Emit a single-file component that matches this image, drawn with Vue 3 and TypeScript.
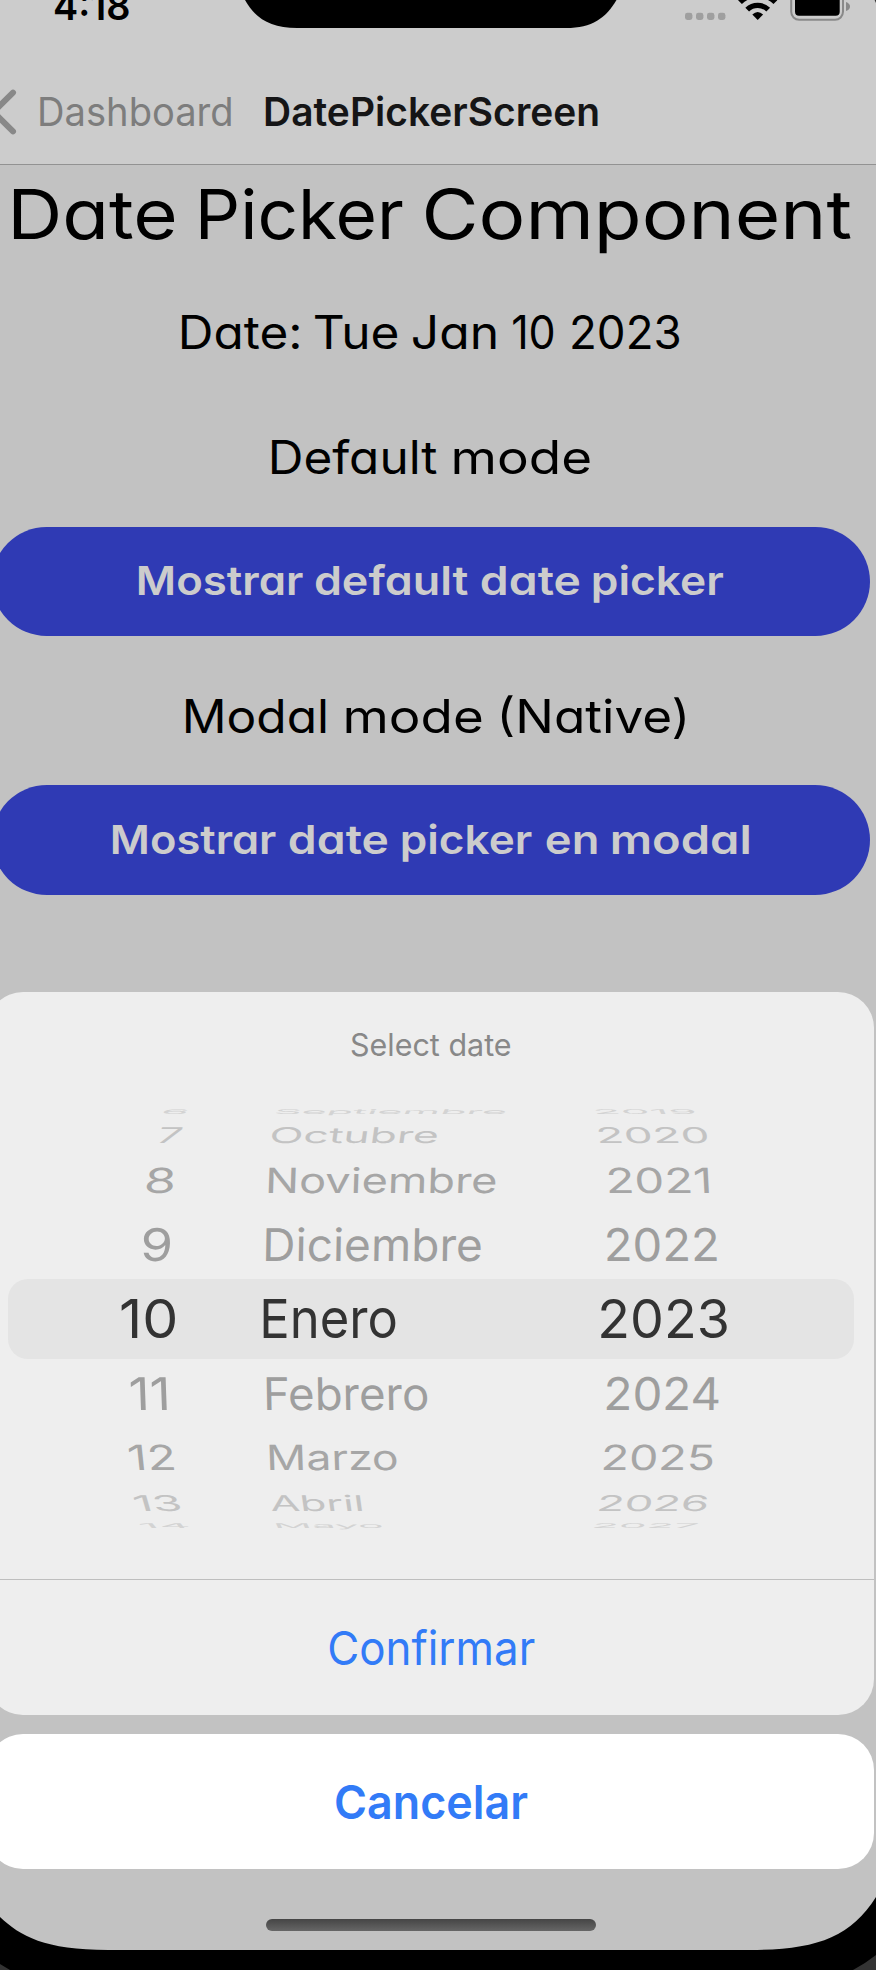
<script setup lang="ts">
interface Ink {
  left: number
  width: number
  advance: number
}

interface Word {
  text: string
  width: number
  gap: number
}

interface WheelItem {
  text: string
  left: number
  right: number
  skew: number
}

interface WheelRow {
  top: number
  base: number
  color: string
  items: WheelItem[]
}

const FAMILY = 'Inter, "Liberation Sans", sans-serif'
const WHEEL_SIZE = 54
const CAP_RATIO = 0.727
const pen = document.createElement('canvas').getContext('2d')!

function measure(text: string, font: string): Ink {
  pen.font = font
  const m = pen.measureText(text)
  return {
    left: -m.actualBoundingBoxLeft,
    width: m.actualBoundingBoxLeft + m.actualBoundingBoxRight,
    advance: m.width,
  }
}

// Gives a label a box of the bound width and stretches its glyphs to fill it edge to edge.
const vFit = {
  mounted(el: HTMLElement, binding: { value: number }) {
    const cs = getComputedStyle(el)
    const ink = measure(el.textContent!.trim(), `${cs.fontWeight} ${cs.fontSize} ${FAMILY}`)
    const inkWidth = el.getBoundingClientRect().width - (ink.advance - ink.width)
    const scale = binding.value / inkWidth
    el.style.width = `${binding.value}px`
    el.style.transformOrigin = '0 50%'
    el.style.transform = `scaleX(${scale.toFixed(4)}) translateX(${(-ink.left).toFixed(2)}px)`
  },
}

// Each word is listed with the gap before it and its own width.
const line = (...parts: [string, number, number][]): Word[] =>
  parts.map(([text, gap, width]) => ({ text, gap, width }))

const title = line(['Date', 13.5, 160.5], ['Picker', 27, 202], ['Component', 23, 424.5])
const dateLine = line(['Date:', 181.5, 117], ['Tue', 16.5, 82.5], ['Jan', 15.5, 82.7], ['10', 17.8, 40.8], ['2023', 17.4, 107.3])
const defaultLine = line(['Default', 271.5, 165.5], ['mode', 17.3, 136])
const defaultButton = line(['Mostrar', 145.5, 165.5], ['default', 12, 153.3], ['date', 12.4, 98], ['picker', 14.3, 131])
const modalLine = line(['Modal', 186.3, 139.7], ['mode', 20, 135.7], ['(Native)', 19.3, 184])
const modalButton = line(['Mostrar', 120, 164.5], ['date', 12.8, 98], ['picker', 15, 130.4], ['en', 13, 50.6], ['modal', 15.4, 136.8])

const item = (text: string, left: number, right: number, skew: number): WheelItem => ({ text, left, right, skew })

const rows: WheelRow[] = [
  { top: 1109.5, base: 1114.3, color: '#d3d3d3', items: [item('6', 162, 189, -40), item('Septiembre', 275.5, 506.5, -25), item('2019', 595, 696, 25)] },
  { top: 1127, base: 1142.7, color: '#c3c3c3', items: [item('7', 157, 182.5, -16), item('Octubre', 271, 438, -8), item('2020', 598, 708, 9)] },
  { top: 1167.8, base: 1193, color: '#a6a6a6', items: [item('8', 146, 175.5, -6), item('Noviembre', 268, 496, -2), item('2021', 608.5, 709.5, 3)] },
  { top: 1228, base: 1260.7, color: '#9e9e9e', items: [item('9', 143, 171.3, -2), item('Diciembre', 265.5, 481, -1), item('2022', 607, 717.5, 1)] },
  { top: 1298.8, base: 1338, color: '#333333', items: [item('10', 121, 175, 0), item('Enero', 263, 395.7, 0), item('2023', 601.3, 727.5, 0)] },
  { top: 1377, base: 1409.7, color: '#9e9e9e', items: [item('11', 130, 167.5, 2), item('Febrero', 266, 427.7, 1), item('2024', 606.7, 719, -1)] },
  { top: 1444.8, base: 1470, color: '#a6a6a6', items: [item('12', 128, 175, 6), item('Marzo', 269, 397, 2), item('2025', 603.7, 713.3, -3)] },
  { top: 1495, base: 1510.7, color: '#c3c3c3', items: [item('13', 132.5, 182, 16), item('Abril', 269.5, 362, 8), item('2026', 599, 708.5, -9)] },
  { top: 1523, base: 1527.8, color: '#d3d3d3', items: [item('14', 138.5, 189.5, 40), item('Mayo', 275.5, 382.5, 25), item('2027', 594, 698, -25)] },
]

const WHEEL_TOP = 1100

function place(row: WheelRow, it: WheelItem): string {
  const ink = measure(it.text, `400 ${WHEEL_SIZE}px ${FAMILY}`)
  const height = row.base - row.top
  const lean = Math.abs(Math.tan((it.skew * Math.PI) / 180)) * height
  const sx = (it.right - it.left - lean) / ink.width
  const sy = height / (WHEEL_SIZE * CAP_RATIO)
  const x = it.left + (it.skew > 0 ? lean : 0)
  return `translate(${x} ${row.base - WHEEL_TOP}) skewX(${it.skew}) scale(${sx} ${sy}) translate(${-ink.left} 0)`
}
</script>

<template>
  <main class="device">
    <header class="header">
      <div class="status"><span v-fit="74" class="time">4:18</span></div>
      <div class="nav">
        <svg class="chevron" width="20" height="50" viewBox="0 0 20 50">
          <path d="M13 5.6 L-6.4 25 L13 44.4" fill="none" stroke="#888888" stroke-width="6" stroke-linecap="round" stroke-linejoin="round" />
        </svg>
        <span v-fit="191.5" class="back">Dashboard</span>
        <span v-fit="333" class="nav-title">DatePickerScreen</span>
      </div>
      <svg class="hardware" width="876" height="30" viewBox="0 0 876 30">
        <path d="M245 0 C255 18 270 28 297 28 H566 C592 28 606 18 616.5 0 Z" fill="#000" />
        <g fill="#9f9f9f">
          <rect v-for="n in 4" :key="n" :x="674 + n * 11" y="12.8" width="7.4" height="7.2" rx="2.4" />
        </g>
        <path d="M752.3 14.4 Q757.7 9.4 763.1 14.4 L757.7 20 Z" fill="#000" />
        <g fill="none" stroke="#000" stroke-width="5.4">
          <path d="M747.2 9.6 A15.2 15.2 0 0 1 768.2 9.6" />
          <path d="M740 2.2 A25 25 0 0 1 775.4 2.2" />
        </g>
        <rect x="791.2" y="-12" width="51.8" height="31.8" rx="8" fill="none" stroke="#898989" stroke-width="2" />
        <rect x="795" y="-8" width="44.7" height="23.8" rx="4" fill="#000" />
        <path d="M846 2 Q850 3.5 850 6.5 Q850 9.5 846 11 Z" fill="#898989" />
        <path d="M874.6 0 H876 V3 Z" fill="#333" />
      </svg>
    </header>

    <section class="content">
      <h1 class="title">
        <span v-for="w in title" :key="w.text" v-fit="w.width" :style="{ marginLeft: w.gap + 'px' }">{{ w.text }}</span>
      </h1>
      <p class="line date">
        <span v-for="w in dateLine" :key="w.text" v-fit="w.width" :style="{ marginLeft: w.gap + 'px' }">{{ w.text }}</span>
      </p>
      <p class="line default">
        <span v-for="w in defaultLine" :key="w.text" v-fit="w.width" :style="{ marginLeft: w.gap + 'px' }">{{ w.text }}</span>
      </p>
      <button class="pill">
        <span v-for="w in defaultButton" :key="w.text" v-fit="w.width" :style="{ marginLeft: w.gap + 'px' }">{{ w.text }}</span>
      </button>
      <p class="line modal">
        <span v-for="w in modalLine" :key="w.text" v-fit="w.width" :style="{ marginLeft: w.gap + 'px' }">{{ w.text }}</span>
      </p>
      <button class="pill second">
        <span v-for="w in modalButton" :key="w.text" v-fit="w.width" :style="{ marginLeft: w.gap + 'px' }">{{ w.text }}</span>
      </button>
    </section>

    <svg class="bezel" width="876" height="80" viewBox="0 0 876 80">
      <path d="M0 27 C20 46 45 60 108 60 H750 C815 60 850 48 876 7 V80 H0 Z" fill="#000" />
      <path d="M853 80 Q866 73 876 65 V80 Z M0 74 L10 80 H0 Z" fill="#333" />
    </svg>

    <section class="sheet">
      <div class="panel">
        <h2 class="prompt"><span v-fit="159.5">Select date</span></h2>
        <div class="wheel">
          <div class="selection"></div>
          <svg class="drum" width="876" height="440" viewBox="0 0 876 440">
            <g v-for="row in rows" :key="row.top" :fill="row.color">
              <text v-for="it in row.items" :key="it.text" :transform="place(row, it)">{{ it.text }}</text>
            </g>
          </svg>
        </div>
        <button class="confirm"><span v-fit="205.5">Confirmar</span></button>
      </div>
      <button class="cancel"><span v-fit="191.5">Cancelar</span></button>
      <div class="home"></div>
    </section>
  </main>
</template>

<style>
html,
body {
  margin: 0;
  background: #c2c2c2;
}
</style>

<style scoped>
.device {
  position: relative;
  width: 876px;
  height: 1970px;
  overflow: hidden;
  background: #c2c2c2;
  color: #000;
  font-family: Inter, "Liberation Sans", sans-serif;
}

.device span {
  display: inline-block;
  flex: none;
  text-align: left;
  white-space: nowrap;
}

button {
  display: flex;
  align-items: center;
  justify-content: center;
  border: 0;
  padding: 0;
  font-family: inherit;
}

.header {
  position: relative;
  height: 164px;
  background: #ccc;
  border-bottom: 1px solid #929292;
}

.status {
  width: 183px;
  height: 11px;
  line-height: 11px;
  text-align: center;
}

.time {
  font-size: 40px;
  font-weight: 600;
}

.hardware {
  position: absolute;
  top: 0;
  left: 0;
}

.nav {
  display: grid;
  grid-template-columns: 20px 232px 358px;
  align-items: center;
  justify-items: center;
  height: 50px;
  margin-top: 75.5px;
  font-size: 39.5px;
}

.chevron {
  overflow: visible;
}

.back {
  color: #7d7d7d;
}

.nav-title {
  font-weight: 600;
  color: #151516;
}

.content {
  width: 862px;
  font-feature-settings: "cv11";
}

.title,
.line {
  display: flex;
  margin: 0;
  font-weight: 400;
}

.title {
  font-size: 68.4px;
  line-height: 98px;
}

.line {
  font-size: 46px;
}

.date {
  line-height: 138px;
}

.default {
  line-height: 113px;
}

.modal {
  line-height: 137px;
}

.pill {
  justify-content: flex-start;
  width: 877.5px;
  height: 109px;
  margin: 13px 0 12px -8px;
  padding-bottom: 2px;
  border-radius: 55px;
  background: #2f3ab4;
  color: #ccc;
  font-size: 40px;
  font-weight: 600;
  font-feature-settings: "cv11";
}

.pill.second {
  height: 110px;
  margin-top: 0;
}

.bezel {
  position: absolute;
  left: 0;
  bottom: 0;
}

.sheet {
  position: absolute;
  top: 991.5px;
  left: -13px;
  width: 887px;
}

.panel {
  height: 723.5px;
  border-radius: 36px;
  background: #eee;
}

.prompt {
  margin: 0;
  padding-top: 33.5px;
  height: 75px;
  color: #888;
  font-size: 31px;
  font-weight: 400;
  line-height: 40px;
  text-align: center;
}

.wheel {
  position: relative;
  height: 479px;
  border-bottom: 1px solid #bebebe;
}

.selection {
  position: absolute;
  top: 179px;
  left: 21px;
  width: 846px;
  height: 80px;
  border-radius: 20px;
  background: #e4e4e4;
}

.drum {
  position: absolute;
  top: 0;
  left: 13px;
  font-size: 54px;
}

.confirm,
.cancel {
  width: 100%;
  height: 135px;
  background: none;
  color: #327bf7;
  font-size: 47px;
}

.confirm {
  height: 134px;
}

.confirm span,
.cancel span {
  margin-left: 2px;
}

.cancel {
  margin-top: 19px;
  border-radius: 36px;
  background: #fff;
  font-weight: 600;
}

.home {
  width: 330px;
  height: 12px;
  margin: 50px 0 0 279px;
  border-radius: 6px;
  background: linear-gradient(#454545, #666);
}
</style>
